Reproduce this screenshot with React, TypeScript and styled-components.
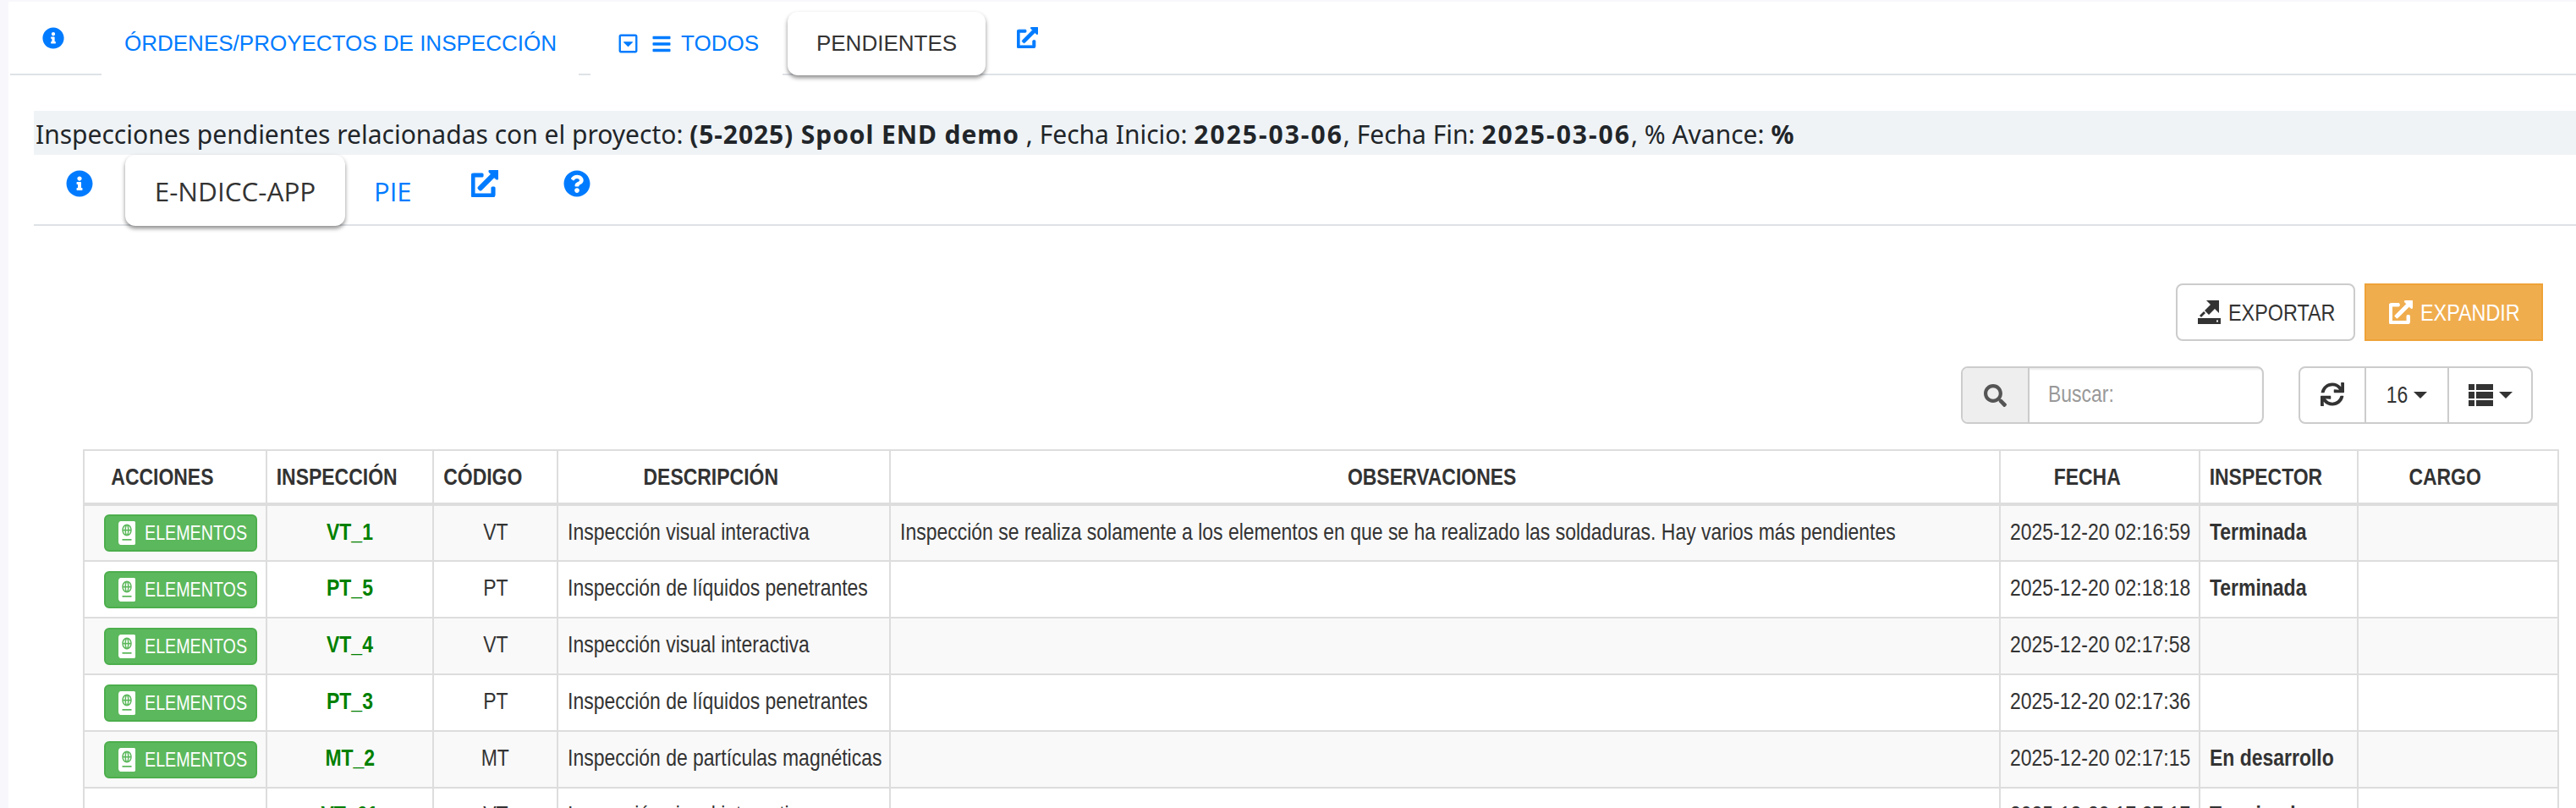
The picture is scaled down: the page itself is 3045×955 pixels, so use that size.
import styled, { createGlobalStyle } from "styled-components"
import { FaInfoCircle, FaExternalLinkAlt, FaQuestionCircle, FaBars, FaRegCaretSquareDown, FaSearch, FaSync, FaPassport } from "react-icons/fa"

const GlobalStyle = createGlobalStyle`
    html, body {
        margin: 0;
        padding: 0;
        height: 955px;
        overflow: hidden;
        background: #f8f7fb;
    }
`

const Page = styled.div`
    margin: 2px 0 0 10px;
    height: 953px;
    overflow: hidden;
    background: #fff;
    font-family: "Liberation Sans", Arial, sans-serif;
    color: #333;
`

// the table and toolbar text in the screenshot is a narrow cut of Arial
const Narrow = styled.span<{ $center?: boolean; $tight?: boolean }>`
    display: inline-block;
    flex-shrink: 0;
    white-space: nowrap;
    transform: scaleX(0.82);
    transform-origin: ${({ $center }) => ($center ? "center" : "left")};
    margin: ${({ $center, $tight }) => ($tight ? "0 -3px" : $center ? "0 -40px" : "0")};
`

const TopNav = styled.div`
    display: flex;
    height: 85px;
    border-bottom: 2px solid #dee2e6;
    margin-left: 2px;
`

const NavIcon = styled.div<{ $w: number; $pl: number; $size: number; $top: number }>`
    width: ${({ $w }) => $w}px;
    padding: ${({ $top }) => $top}px 0 0 ${({ $pl }) => $pl}px;
    box-sizing: border-box;
    color: #007bff;
    font-size: ${({ $size }) => $size}px;
    line-height: 0;
`

const HeavyLink = styled(FaExternalLinkAlt)`
    stroke: currentColor;
    stroke-width: 18px;
    flex-shrink: 0;
`

const NavLink = styled.div<{ $w: number; $pl: number; $ml: number }>`
    display: flex;
    align-items: center;
    box-sizing: border-box;
    width: ${({ $w }) => $w}px;
    height: 87px;
    margin: 0 0 -2px ${({ $ml }) => $ml}px;
    padding: 14px 0 0 ${({ $pl }) => $pl}px;
    border-bottom: 2px solid #fff;
    color: #007bff;
    font-size: 26px;
    white-space: nowrap;
`

const CaretBox = styled(FaRegCaretSquareDown)`
    font-size: 25px;
    margin-right: 15px;
`

const Burger = styled(FaBars)`
    font-size: 24px;
    margin-right: 11px;
`

const ActiveTab = styled.div<{ $w: number; $size: number; $font: string }>`
    display: flex;
    align-items: center;
    justify-content: center;
    box-sizing: border-box;
    width: ${({ $w }) => $w}px;
    background: #fff;
    border-radius: 12px;
    box-shadow: 0 3px 5px rgba(0, 0, 0, 0.45);
    color: #333;
    font-family: ${({ $font }) => $font};
    font-size: ${({ $size }) => $size}px;
    white-space: nowrap;
    position: relative;
`

const TopTab = styled(ActiveTab)`
    height: 75px;
    margin: 12px 0 -2px 6px;
`

const Section = styled.div`
    margin: 42px 0 0 30px;
`

const ProjectBar = styled.div`
    height: 52px;
    padding-left: 2px;
    background: #eff3f6;
    color: #212529;
    font-family: "Noto Sans", "Open Sans", sans-serif;
    font-size: 30px;
    line-height: 55px;
    white-space: nowrap;
`

const ProjectValue = styled.b<{ $spacing: number }>`
    letter-spacing: ${({ $spacing }) => $spacing}px;
`

const SubNav = styled.div`
    display: flex;
    height: 82px;
    border-bottom: 2px solid #dee2e6;
`

const SubTab = styled(ActiveTab)`
    height: 84px;
`

const SubLink = styled.div`
    margin-left: 34px;
    padding-top: 15px;
    color: #007bff;
    font-family: "Open Sans", sans-serif;
    font-size: 31px;
    line-height: 56px;
`

const ButtonRow = styled.div`
    display: flex;
    justify-content: flex-end;
    gap: 11px;
    margin: 68px 39px 0 0;
`

const ActionButton = styled.div<{ $orange?: boolean }>`
    display: flex;
    align-items: center;
    gap: 9px;
    box-sizing: border-box;
    height: 68px;
    width: ${({ $orange }) => ($orange ? 211 : 212)}px;
    padding-left: ${({ $orange }) => ($orange ? 27 : 24)}px;
    border: 2px solid ${({ $orange }) => ($orange ? "#eea236" : "#ccc")};
    border-radius: ${({ $orange }) => ($orange ? "0" : "8px")};
    background: ${({ $orange }) => ($orange ? "#f0ad4e" : "#fff")};
    color: ${({ $orange }) => ($orange ? "#fff" : "#333")};
    font-size: 28.5px;
`

const SearchRow = styled.div`
    display: flex;
    justify-content: flex-end;
    gap: 41px;
    margin: 30px 51px 0 0;
`

const SearchGroup = styled.div`
    display: flex;
    box-sizing: border-box;
    width: 358px;
    height: 68px;
    border: 2px solid #ccc;
    border-radius: 8px;
    overflow: hidden;
`

const SearchAddon = styled.div`
    display: flex;
    align-items: center;
    justify-content: center;
    width: 77px;
    background: #eee;
    border-right: 2px solid #ccc;
    color: #555;
    font-size: 27px;
`

const SearchInput = styled.div`
    flex: 1;
    padding-left: 22px;
    box-shadow: inset 0 2px 2px rgba(0, 0, 0, 0.075);
    color: #999;
    font-size: 28px;
    line-height: 62px;
`

const ToolGroup = styled.div`
    display: flex;
    box-sizing: border-box;
    width: 277px;
    height: 68px;
    border: 2px solid #ccc;
    border-radius: 8px;
`

const ToolCell = styled.div<{ $w: number; $last?: boolean }>`
    display: flex;
    align-items: center;
    justify-content: center;
    gap: 7px;
    box-sizing: border-box;
    width: ${({ $w }) => $w}px;
    border-right: ${({ $last }) => ($last ? "none" : "2px solid #ccc")};
    color: #333;
    font-size: 28px;
`

const RefreshIcon = styled(FaSync)`
    font-size: 28px;
    margin-bottom: 2px;
`

const Caret = styled.span`
    width: 0;
    height: 0;
    border-top: 8px solid #333;
    border-left: 8px solid transparent;
    border-right: 8px solid transparent;
`

const Table = styled.table`
    width: 2925px;
    margin: 30px 0 0 58px;
    table-layout: fixed;
    border-collapse: collapse;
    font-size: 28px;
    color: #333;
`

const HeadCell = styled.th`
    height: 64px;
    padding: 0 30px 0 0;
    box-sizing: border-box;
    border: 2px solid #ddd;
    border-bottom: 4px solid #ddd;
    font-weight: bold;
    text-align: center;
    white-space: nowrap;
`

const Row = styled.tr<{ $striped: boolean }>`
    height: 67px;
    background: ${({ $striped }) => ($striped ? "#f9f9f9" : "#fff")};
`

const Cell = styled.td<{ $center?: boolean; $bold?: boolean; $green?: boolean }>`
    padding: ${({ $center }) => ($center ? "0 0 3px" : "0 0 3px 11px")};
    border: 2px solid #ddd;
    text-align: ${({ $center }) => ($center ? "center" : "left")};
    font-weight: ${({ $bold }) => ($bold ? "bold" : "normal")};
    color: ${({ $green }) => ($green ? "#008000" : "#333")};
    white-space: nowrap;
`

const ActionCell = styled.td`
    padding: 0 0 0 23px;
    border: 2px solid #ddd;
`

const ElementsButton = styled.div`
    display: flex;
    align-items: center;
    gap: 11px;
    box-sizing: border-box;
    width: 181px;
    height: 44px;
    padding-left: 15px;
    border: 2px solid #4cae4c;
    border-radius: 6px;
    background: #5cb85c;
    color: #fff;
    font-size: 24px;
`

const PassportIcon = styled(FaPassport)`
    flex-shrink: 0;
    width: 20px;
    height: 28px;
`

const ExportSvg = styled.svg`
    flex-shrink: 0;
    fill: #333;
`

const columns = [
    { title: "ACCIONES", width: 216 },
    { title: "INSPECCIÓN", width: 197 },
    { title: "CÓDIGO", width: 147 },
    { title: "DESCRIPCIÓN", width: 393 },
    { title: "OBSERVACIONES", width: 1312 },
    { title: "FECHA", width: 236 },
    { title: "INSPECTOR", width: 187 },
    { title: "CARGO", width: 237 },
]

const rows = [
    { id: "VT_1", code: "VT", desc: "Inspección visual interactiva", obs: "Inspección se realiza solamente a los elementos en que se ha realizado las soldaduras. Hay varios más pendientes", date: "2025-12-20 02:16:59", state: "Terminada" },
    { id: "PT_5", code: "PT", desc: "Inspección de líquidos penetrantes", obs: "", date: "2025-12-20 02:18:18", state: "Terminada" },
    { id: "VT_4", code: "VT", desc: "Inspección visual interactiva", obs: "", date: "2025-12-20 02:17:58", state: "" },
    { id: "PT_3", code: "PT", desc: "Inspección de líquidos penetrantes", obs: "", date: "2025-12-20 02:17:36", state: "" },
    { id: "MT_2", code: "MT", desc: "Inspección de partículas magnéticas", obs: "", date: "2025-12-20 02:17:15", state: "En desarrollo" },
    { id: "VT_61", code: "VT", desc: "Inspección visual interactiva", obs: "", date: "2025-12-20 17:27:17", state: "Terminada" },
]

const ExportIcon = () => (
    <ExportSvg width="27" height="28" viewBox="0 0 27 28">
        <path d="M0 21h27v7H0zM22 23.500v2h2v-2z" fillRule="evenodd" />
        <path d="M10 0h15v15l-5-5-7 7-5-5 7-7z" />
        <path d="M2 18l5-5 2 2-5 5z" />
    </ExportSvg>
)

const ListIcon = () => (
    <svg width="29" height="26" viewBox="0 0 29 26" fill="#333">
        <rect x="0" y="0" width="7" height="7" />
        <rect x="9" y="0" width="20" height="7" />
        <rect x="0" y="9" width="7" height="8" />
        <rect x="9" y="9" width="20" height="8" />
        <rect x="0" y="19" width="7" height="7" />
        <rect x="9" y="19" width="20" height="7" />
    </svg>
)

export default function App() {
    const tableRows = rows.map((row, i) => {
        return (
            <Row key={row.id} $striped={i % 2 === 0}>
                <ActionCell>
                    {i < 5 && (
                        <ElementsButton>
                            <PassportIcon preserveAspectRatio="none" />
                            <Narrow>ELEMENTOS</Narrow>
                        </ElementsButton>
                    )}
                </ActionCell>
                <Cell $center $bold $green><Narrow $center>{row.id}</Narrow></Cell>
                <Cell $center><Narrow $center>{row.code}</Narrow></Cell>
                <Cell><Narrow>{row.desc}</Narrow></Cell>
                <Cell><Narrow>{row.obs}</Narrow></Cell>
                <Cell><Narrow>{row.date}</Narrow></Cell>
                <Cell $bold><Narrow>{row.state}</Narrow></Cell>
                <Cell />
            </Row>
        )
    })

    return (
        <>
            <GlobalStyle />
            <Page>
                <TopNav>
                    <NavIcon $w={108} $pl={38} $size={26} $top={30}><FaInfoCircle /></NavIcon>
                    <NavLink $w={564} $pl={27} $ml={0}>ÓRDENES/PROYECTOS DE INSPECCIÓN</NavLink>
                    <NavLink $w={227} $pl={32} $ml={14}>
                        <CaretBox />
                        <Burger />
                        TODOS
                    </NavLink>
                    <TopTab $w={234} $size={26} $font={`"Liberation Sans", sans-serif`}>PENDIENTES</TopTab>
                    <NavIcon $w={100} $pl={37} $size={25} $top={30}><HeavyLink /></NavIcon>
                </TopNav>
                <Section>
                    <ProjectBar>
                        Inspecciones pendientes relacionadas con el proyecto: <ProjectValue $spacing={0.9}>(5-2025) Spool END demo</ProjectValue> , Fecha Inicio: <ProjectValue $spacing={2}>2025-03-06</ProjectValue>, Fecha Fin: <ProjectValue $spacing={2}>2025-03-06</ProjectValue>, % Avance: <ProjectValue $spacing={0}>%</ProjectValue>
                    </ProjectBar>
                    <SubNav>
                        <NavIcon $w={108} $pl={38} $size={32} $top={18}><FaInfoCircle /></NavIcon>
                        <SubTab $w={260} $size={31.5} $font={`"Open Sans", sans-serif`}>E-NDICC-APP</SubTab>
                        <SubLink>PIE</SubLink>
                        <NavIcon $w={107} $pl={70} $size={32} $top={18}><HeavyLink /></NavIcon>
                        <NavIcon $w={180} $pl={72} $size={32} $top={18}><FaQuestionCircle /></NavIcon>
                    </SubNav>
                    <ButtonRow>
                        <ActionButton><ExportIcon /><Narrow>EXPORTAR</Narrow></ActionButton>
                        <ActionButton $orange><HeavyLink size={28} /><Narrow>EXPANDIR</Narrow></ActionButton>
                    </ButtonRow>
                    <SearchRow>
                        <SearchGroup>
                            <SearchAddon><FaSearch /></SearchAddon>
                            <SearchInput><Narrow>Buscar:</Narrow></SearchInput>
                        </SearchGroup>
                        <ToolGroup>
                            <ToolCell $w={78}><RefreshIcon /></ToolCell>
                            <ToolCell $w={98}><Narrow $center $tight>16</Narrow><Caret /></ToolCell>
                            <ToolCell $w={97} $last><ListIcon /><Caret /></ToolCell>
                        </ToolGroup>
                    </SearchRow>
                    <Table>
                        <colgroup>
                            {columns.map(col => <col key={col.title} width={col.width} />)}
                        </colgroup>
                        <thead>
                            <tr>
                                {columns.map(col => <HeadCell key={col.title}><Narrow $center>{col.title}</Narrow></HeadCell>)}
                            </tr>
                        </thead>
                        <tbody>{tableRows}</tbody>
                    </Table>
                </Section>
            </Page>
        </>
    )
}
